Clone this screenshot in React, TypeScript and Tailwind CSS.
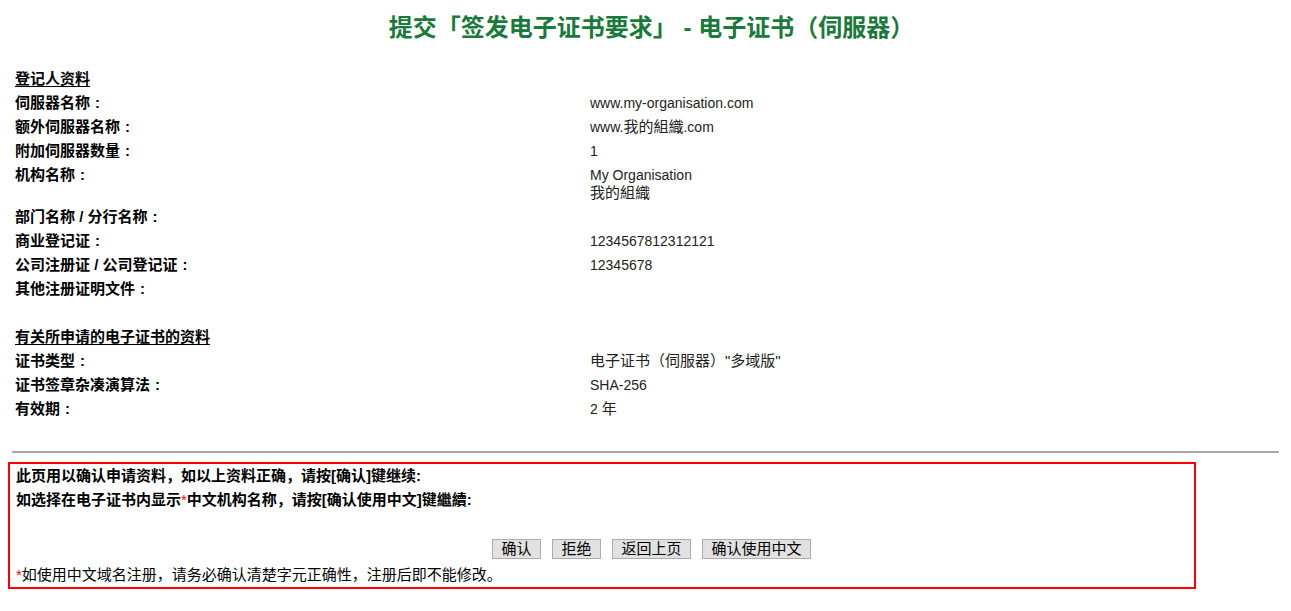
const font = { fontFamily: '"Liberation Sans", "Noto Sans CJK SC", sans-serif' };

type Row = { label: string; values?: React.ReactNode[]; heading?: boolean; blank?: boolean };

const cjk = (s: string) => <span className="text-[15px]">{s}</span>;

const rows: Row[] = [
  { label: '登记人资料', heading: true },
  { label: '伺服器名称', values: ['www.my-organisation.com'] },
  { label: '额外伺服器名称', values: [<>www.{cjk('我的組織')}.com</>] },
  { label: '附加伺服器数量', values: ['1'] },
  { label: '机构名称', values: ['My Organisation', cjk('我的組織')] },
  { label: '部门名称 / 分行名称' },
  { label: '商业登记证', values: ['1234567812312121'] },
  { label: '公司注册证 / 公司登记证', values: ['12345678'] },
  { label: '其他注册证明文件' },
  { label: '', blank: true },
  { label: '有关所申请的电子证书的资料', heading: true },
  { label: '证书类型', values: [cjk('电子证书（伺服器）"多域版"')] },
  { label: '证书签章杂凑演算法', values: ['SHA-256'] },
  { label: '有效期', values: [<>2 {cjk('年')}</>] },
];

const buttons = ['确认', '拒绝', '返回上页', '确认使用中文'];

export default function App() {
  return (
    <div className="min-h-screen bg-white text-black text-[14px]" style={font}>
      <div className="h-[56px] flex items-center justify-center pl-[12px]">
        <h1 className="text-[24px] font-bold text-[#1a7a3c] leading-none">
          提交「签发电子证书要求」 - 电子证书（伺服器）
        </h1>
      </div>

      <div className="mt-[11px] pl-[15px]">
        {rows.map((r, i) => (
          <div key={i} className="grid grid-cols-[575px_1fr] py-[3px] leading-[18px]">
            {r.heading ? (
              <div className="text-[15px] font-bold underline underline-offset-2">{r.label}</div>
            ) : (
              <div className="text-[15px] font-bold">
                {r.blank ? '\u00a0' : r.label}
                {!r.blank && <span className="inline-block w-[15px] text-center">:</span>}
              </div>
            )}
            <div className="text-[#222]">
              {r.values?.map((v, j) => (
                <div key={j}>{v}</div>
              ))}
            </div>
          </div>
        ))}
      </div>

      <div className="mt-[30px] mx-[12px] h-[2px] bg-[#a8a8a8]" />

      <div className="mt-[9px] ml-[8px] w-[1188px] border-2 border-[#ff0000] pl-[6px] text-[15px] leading-[24px]">
        <div className="font-bold">此页用以确认申请资料，如以上资料正确，请按[确认]键继续:</div>
        <div className="font-bold">
          如选择在电子证书内显示<span className="text-[#ff0000] font-normal">*</span>中文机构名称，请按[确认使用中文]键繼續:
        </div>
        <div className="mt-[27px] flex gap-[11px] pl-[476px]">
          {buttons.map((b) => (
            <button
              key={b}
              className="h-[20px] px-[8.5px] bg-[#e1e1e1] border border-[#adadad] text-[15px] leading-[18px] text-black"
              style={font}
            >
              {b}
            </button>
          ))}
        </div>
        <div className="mt-[4px]">
          <span className="text-[#ff0000]">*</span>如使用中文域名注册，请务必确认清楚字元正确性，注册后即不能修改。
        </div>
      </div>
    </div>
  );
}
